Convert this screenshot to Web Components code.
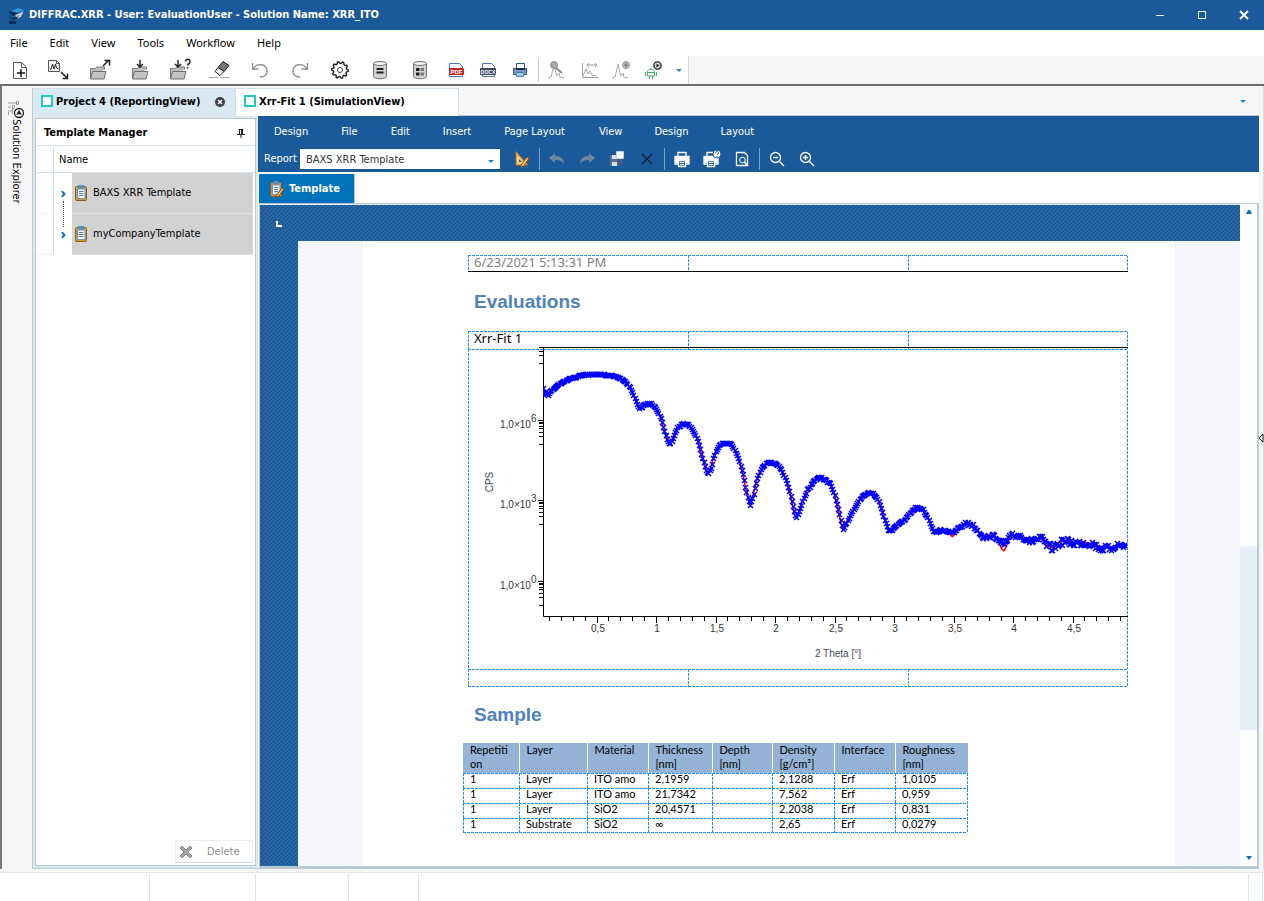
<!DOCTYPE html>
<html lang="en">
<head>
<meta charset="utf-8">
<title>DIFFRAC.XRR</title>
<style>
  html, body { margin: 0; height: 100%; }
  body { font: 11px/16px "DejaVu Sans Condensed", "Noto Sans", sans-serif; color: #000; background: #fff; }
</style>
</head>
<body>
<xrr-app></xrr-app>

<script>
const BASE = `
  *, *::before, *::after { box-sizing: border-box; }
  button, select { font: inherit; color: inherit; background: none; border: 0; padding: 0; margin: 0; }
  :host([hidden]) { display: none; }
`;

function element(name, css, html, after) {
  const template = document.createElement('template');
  template.innerHTML = `<style>${BASE}${css}</style>${html}`;
  customElements.define(name, class extends HTMLElement {
    constructor() {
      super();
      this.attachShadow({ mode: 'open' }).append(template.content.cloneNode(true));
    }
    connectedCallback() { if (after) after(this, this.shadowRoot); }
  });
}

/* ---------- icons ---------- */
const folder = `<path d="M3.5 20V10.5h5l1-1.500h8v2.500" fill="#bdbdbd" stroke="#7a7a7a"/><path d="M3.500 21l2-7.500h13.500l-2 7.500z" fill="#c4c4c4" stroke="#6d6d6d"/>`;
const peaks = `<path d="M3 20l3-1 1-4 2-9 2 9 1 3 2-3 1 4 4 1" fill="none" stroke="#a9a9a9"/>`;
const printer = c => `<path d="M8 9V5.500h8V9M8 17H5V9.500h14V17h-3" fill="none" stroke="${c}" stroke-width="1.300"/><path d="M5 10h14v6H5z" fill="${c}"/><path d="M8.500 13.500h7v6h-7z" fill="#1b5a9a" stroke="${c}" stroke-width="1.300"/><path d="M10 15.500h4M10 17.500h4" stroke="${c}"/>`;
const cylinder = `<path d="M5.500 5.500v13c0 3 13 3 13 0v-13" fill="#d2d2d2" stroke="#6f6f6f"/><ellipse cx="12" cy="5.500" rx="6.500" ry="2" fill="#eee" stroke="#6f6f6f"/>`;
const clipboard = `<rect x="6.500" y="5.500" width="11" height="14" rx="1" fill="#d69a2e" stroke="#8c5a10"/><path d="M8.500 8h7.500v9.500H8.500z" fill="#f4f8fe" stroke="#6f93c0"/><rect x="9" y="4" width="6" height="3.500" rx="1" fill="#4f8bcb"/><path d="M10 10.500h4.500M10 12.500h4.500M10 14.500h4.500" stroke="#4a84c8"/>`;
const gear = (() => {
  const pts = [];
  for (let i = 0; i < 40; i++) {
    const r = (i % 4 < 2) ? 8.3 : 6.6, a = i / 40 * Math.PI * 2;
    pts.push((12 + r * Math.cos(a)).toFixed(2) + ' ' + (12 + r * Math.sin(a)).toFixed(2));
  }
  return 'M' + pts.join('L') + 'z';
})();
const ICONS = {
  app: `<path d="M7 8l7-3 6 2-5 3z" fill="#2e9be0"/><path d="M5 8l8 2 7-2-1 3-6 3-7-3z" fill="#0a2c50"/><path d="M11 12l9-4-3 6-4 2z" fill="#b9c8d6"/><path d="M5 13c3 3 8 2 10-1l-2 4-5 1z" fill="#16324f"/><path d="M5 18h7v3H5z" fill="#0d2f58"/>`,
  'new': `<path d="M5.500 4.500h8l5 5v11h-13z" fill="#fff" stroke="#5a5a5a"/><path d="M13.500 4.500v5h5" fill="none" stroke="#5a5a5a"/><path d="M13 11v8M9 15h8" stroke="#111" stroke-width="1.500"/>`,
  importcurve: `<path d="M.5 2.500h8l3 3v8H.5z" fill="#f4f4f4" stroke="#555"/><path d="M8.500 2.500v3h3" fill="none" stroke="#555"/><path d="M2 12l1.500-2 1-4 1.500 5 1.500-5 1 4 2 1" fill="none" stroke="#222"/><path d="M13 14l6 6M19.500 15.500v5h-5" fill="none" stroke="#222" stroke-width="1.500"/>`,
  open: `<g transform="translate(-1)">${folder}</g><path d="M15 8l6-6M16.500 2.500h5v5" fill="none" stroke="#222" stroke-width="1.500"/>`,
  save: `<g transform="translate(1)">${folder}</g><path d="M12 2v7M9 6l3 3 3-3" fill="none" stroke="#222" stroke-width="1.500"/>`,
  saveas: `<g transform="translate(-1)">${folder}<path d="M11 2v7M8 6l3 3 3-3" fill="none" stroke="#222" stroke-width="1.500"/></g><path d="M17.500 3.500c0-3 5-3 4.500.5 0 2-2.500 1.500-2.500 3.500M19.500 9v1.500" fill="none" stroke="#222" stroke-width="1.500"/>`,
  erase: `<path d="M10 9.500l5-6 6 4-5 6z" fill="#777" stroke="#222"/><path d="M10 9.500l-3 4 5 4 4-4z" fill="#eee" stroke="#222"/><path d="M1 19.500h9M12 19.500h10" stroke="#aaa"/>`,
  undo: `<path d="M4.500 5v6h6M5 11c3-6 14-6 14 2 0 4-3 6-7 6" fill="none" stroke="#8d8d8d" stroke-width="1.300"/>`,
  redo: `<path d="M19.500 5v6h-6M19 11c-3-6-14-6-14 2 0 4 3 6 7 6" fill="none" stroke="#8d8d8d" stroke-width="1.300"/>`,
  settings: `<path d="${gear}" fill="#fff" stroke="#222" stroke-width="1.400"/><circle cx="12" cy="12" r="2.500" fill="none" stroke="#444"/>`,
  database: `${cylinder}<path d="M8.500 11h7M8.500 14.500h7" stroke="#222" stroke-width="2"/>`,
  datagrid: `${cylinder}<path d="M8 10h3.500v3H8zM8 14.500h3.500v3H8z" fill="#222"/><path d="M12.500 10H16v3h-3.500zM12.500 14.500H16v3h-3.500z" fill="#777"/>`,
  pdf: `<path d="M5.500 5.500h10l3 3v10h-13z" fill="#fff" stroke="#5472b4"/><rect x="5" y="10" width="15" height="7" rx="1" fill="#c5282c"/><text x="12.500" y="16" text-anchor="middle" font-family="Liberation Sans" font-size="6" font-weight="bold" fill="#fff">PDF</text>`,
  docx: `<path d="M6.500 5.500h9l3 3v10h-12z" fill="#fff" stroke="#5472b4"/><rect x="4" y="10" width="16" height="7" rx="1" fill="#3d4a66"/><text x="12" y="15.500" text-anchor="middle" font-family="Liberation Sans" font-size="5" font-weight="bold" fill="#fff">DOCX</text>`,
  print: `<path d="M8.500 5.500h8v5h-8z" fill="#fff" stroke="#34568f"/><path d="M5.500 10.500h13v6h-13z" fill="#7d98cf" stroke="#2f4d87"/><path d="M8 10h9v2H8z" fill="#1c2c4c"/><path d="M8.500 14.500h7v4h-7z" fill="#9fd4f7" stroke="#4b79b8"/>`,
  peakfind: `${peaks}<circle cx="9" cy="7" r="3.500" fill="#aaa" stroke="#8a8a8a"/><path d="M11 10l6 5" stroke="#8a8a8a" stroke-width="2"/>`,
  range: `<path d="M5.500 5v14.500h16" fill="none" stroke="#a6a6a6"/><path d="M6 18l3-7 2 5 2-3 2 4 5 1" fill="none" stroke="#a6a6a6"/><path d="M10 7h10M12 5l-2 2 2 2M18 5l2 2-2 2" fill="none" stroke="#999"/>`,
  peakadd: `${peaks}<circle cx="17" cy="7" r="3.500" fill="#bbb" stroke="#999"/><path d="M15 7h4M17 5v4" stroke="#777"/>`,
  robot: `<path d="M6.500 18v-4.500c0-3 7-3 7 0V18zM4.500 14v4M15.500 14v4M8.500 18v3M11.500 18v3M6.500 14.500h7M10 11V9.500" fill="none" stroke="#3fae6c"/><circle cx="16.500" cy="7.500" r="3.600" fill="#ddd" stroke="#222" stroke-width="1.400"/><path d="M15.500 5.500l3 2-3 2z" fill="#111"/>`,
  caret: `<path d="M9 11h6l-3 3z" fill="#1f83c8"/>`,
  up: `<path d="M9 14h6l-2-4h-2z" fill="#0b6fb8"/>`,
  down: `<path d="M9 10h6l-3 4z" fill="#0b6fb8"/>`,
  tabclose: `<circle cx="12" cy="12" r="5" fill="#3b3f44"/><path d="M10 10l4 4M14 10l-4 4" stroke="#fff" stroke-width="1.500"/>`,
  view: `<path d="M7 6h10v10H7z" fill="#fff" stroke="#1fc9c4" stroke-width="2"/>`,
  pin: `<path d="M10.500 8.500h5M11.500 8.500v5M9 13.500h8M13 14v3" fill="none" stroke="#222"/><path d="M13 8h2v5.500h-2z" fill="#222"/>`,
  explorer: `<path d="M4 5h8M4 9h3M4 13h4M4.500 14v3M8.500 8v8" stroke="#9a9a9a" fill="none"/><path d="M12.500 3.500h2v3h-2zM8.500 7.500h2v3h-2z" fill="#fff" stroke="#9a9a9a"/><circle cx="15" cy="15" r="4.500" fill="#eee" stroke="#222" stroke-width="1.300"/><path d="M15 12l3 5-3-1-3 1z" fill="#222"/>`,
  expand: `<path d="M10 9h2l3 3-3 3h-2l2-3z" fill="#1173c2"/>`,
  clipboard: clipboard,
  designer: `<path d="M6.500 6v11.500h10z" fill="#ffd48a" stroke="#e99a35" stroke-width="1.500"/><path d="M9 12v3h3z" fill="#1b5a9a"/><path d="M11 18l6-8 2 1-5 8-3 1z" fill="#ffc266" stroke="#8a5212"/>`,
  templ: `<g transform="translate(-1)">${clipboard.replace('#d69a2e', '#d98c42')}</g><path d="M11 19l6-8 2 1-5 7-3 1z" fill="#ffc25e" stroke="#8a4a12"/>`,
  back: `<path d="M4 11l6-5v3c6 0 9 3 9 8-2-3-4-4-9-4v3z" fill="#70889f"/>`,
  fwd: `<path d="M20 11l-6-5v3c-6 0-9 3-9 8 2-3 4-4 9-4v3z" fill="#70889f"/>`,
  disks: `<path d="M5 8h8v11H5z" fill="#5c6f99"/><path d="M7 8h5v4H7zM7 15h5v4H7z" fill="#d8dfee"/><path d="M12 12h5v6h-5z" fill="#495b85"/><path d="M11.500 4.500h7v7h-7z" fill="#f2f5fb" stroke="#c3cfe4"/>`,
  cross: `<path d="M7 7l10 10M17 7L7 17" stroke="#0d1b2a" stroke-width="1.200"/>`,
  wprint: printer('#fff'),
  wprintq: `<g transform="translate(-1)">${printer('#fff')}</g><circle cx="17" cy="7" r="4" fill="#fff" stroke="#1b5a9a"/><path d="M15.500 6c0-2 3-2 3 0 0 1-1.500 1-1.500 2M17 9v1" fill="none" stroke="#1b5a9a"/>`,
  preview: `<path d="M6.500 5.500h8l3 3v10h-11z" fill="none" stroke="#fff" stroke-width="1.300"/><circle cx="12.500" cy="13" r="2.800" fill="#1b5a9a" stroke="#fff"/><path d="M14.500 15l3 3.500" stroke="#fff" stroke-width="1.500"/>`,
  zoomout: `<circle cx="10.500" cy="10.500" r="5" fill="none" stroke="#fff" stroke-width="1.300"/><path d="M8 10.500h5M14.500 14.500l4.500 4.500" stroke="#fff" stroke-width="1.500"/>`,
  zoomin: `<circle cx="10.500" cy="10.500" r="5" fill="none" stroke="#fff" stroke-width="1.300"/><path d="M8 10.500h5M10.500 8v5M14.500 14.500l4.500 4.500" stroke="#fff" stroke-width="1.500"/>`,
  min: `<path d="M9 12.500h8" stroke="#fff"/>`,
  max: `<path d="M9.500 8.500h7v7h-7z" fill="none" stroke="#fff"/>`,
  close: `<path d="M9 8l8 8M17 8l-8 8" stroke="#fff" stroke-width="1.800"/>`,
  'delete': `<path d="M6 8l2-2 4 4 4-4 2 2-4 4 4 4-2 2-4-4-4 4-2-2 4-4z" fill="#a4a4a4" stroke="#8a8a8a"/>`,
};

element('xrr-icon', `
  :host { display: block; width: 24px; height: 24px; flex: none; }
  svg { display: block; width: 100%; height: 100%; }
`, `<svg viewBox="0 0 24 24" aria-hidden="true"></svg>`, (host, root) => {
  root.querySelector('svg').innerHTML = ICONS[host.getAttribute('name')] || '';
});

element('tool-button', `
  :host { display: block; width: var(--tool-width, 40px); flex: none; }
  button { display: flex; width: 100%; height: 28px; align-items: center; justify-content: center; }
`, `<button type="button"><xrr-icon></xrr-icon></button>`, (host, root) => {
  root.querySelector('button').setAttribute('aria-label', host.getAttribute('label'));
  const old = root.querySelector('xrr-icon');
  const icon = document.createElement('xrr-icon');
  icon.setAttribute('name', host.getAttribute('icon'));
  old.replaceWith(icon);
});

element('menu-item', `
  :host { display: block; flex: none; }
  button { display: block; height: 26px; padding: 0 var(--menu-pad, 11px); white-space: nowrap; }
`, `<button type="button"><slot></slot></button>`);

element('title-bar', `
  :host { display: flex; align-items: center; height: 30px; flex: none; padding-left: 4px; background: #1b5a9a; color: #fff; font-weight: bold; }
  h1 { font: inherit; margin: 0; flex: 1; padding-left: 1px; white-space: nowrap; }
  nav { display: flex; --tool-width: 42px; }
`, `<xrr-icon name="app"></xrr-icon><h1><slot></slot></h1>
  <nav aria-label="Window">
    <tool-button icon="min" label="Minimize"></tool-button>
    <tool-button icon="max" label="Maximize"></tool-button>
    <tool-button icon="close" label="Close"></tool-button>
  </nav>`);

element('main-menu', `
  :host { display: flex; height: 26px; flex: none; background: #fff; font-family: "Noto Sans", sans-serif; }
`, `<slot></slot>`);

element('main-tools', `
  :host { display: flex; flex: none; background: #f6f6f6; border-bottom: 2px solid #6f6a6c; }
  div { display: flex; align-items: center; height: 28px; background: #fff; border-right: 1px solid #c9d9e3; }
  .small { --tool-width: 32px; border: 0; }
  .caret { --tool-width: 19px; }
  i { width: 1px; height: 24px; margin: 0 2px; background: #b9cfdd; }
`, `<div role="toolbar" aria-label="Main">
    <tool-button icon="new" label="New"></tool-button>
    <tool-button icon="importcurve" label="Import"></tool-button>
    <tool-button icon="open" label="Open"></tool-button>
    <tool-button icon="save" label="Save"></tool-button>
    <tool-button icon="saveas" label="Save as"></tool-button>
    <tool-button icon="erase" label="Clear"></tool-button>
    <tool-button icon="undo" label="Undo"></tool-button>
    <tool-button icon="redo" label="Redo"></tool-button>
    <tool-button icon="settings" label="Settings"></tool-button>
    <tool-button icon="database" label="Database"></tool-button>
    <tool-button icon="datagrid" label="Material database"></tool-button>
    <div class="small">
      <tool-button icon="pdf" label="Export as PDF"></tool-button>
      <tool-button icon="docx" label="Export as DOCX"></tool-button>
      <tool-button icon="print" label="Print"></tool-button>
      <i></i>
      <tool-button icon="peakfind" label="Find peak"></tool-button>
      <tool-button icon="range" label="Range"></tool-button>
      <tool-button icon="peakadd" label="Add peak"></tool-button>
      <tool-button icon="robot" label="Run automation"></tool-button>
      <tool-button class="caret" icon="caret" label="More tools"></tool-button>
    </div>
  </div>`);

element('side-rail', `
  :host { display: block; width: 32px; flex: none; border-left: 2px solid #777; padding: 12px 0 0 2px; }
  button { display: flex; align-items: center; width: 24px; writing-mode: vertical-rl; white-space: nowrap; }
  span { margin-top: -3px; }
`, `<button type="button"><xrr-icon name="explorer"></xrr-icon><span><slot></slot></span></button>`);

element('view-tab', `
  :host { display: flex; align-items: center; height: 28px; font-weight: bold; white-space: nowrap; padding: 0 0 1px 2px;
          background: #fff; border: 1px solid #cfe0ec; border-width: 1px 1px 0 0; width: 223px; }
  :host([active]) { background: #d9e9f4; width: 204px; border-left: 1px solid #b9cad3; }
  span { flex: 1; margin-left: -3px; }
  button { margin-right: 3px; }
  :host(:not([active])) button { display: none; }
`, `<xrr-icon name="view"></xrr-icon><span><slot></slot></span><button type="button" aria-label="Close tab"><xrr-icon name="tabclose"></xrr-icon></button>`);

element('tree-item', `
  :host { display: grid; grid-template-columns: 18px 18px 1fr; height: 41px; }
  .gutter { border-right: 1px solid #d5e1e8; border-bottom: 1px solid #eef2f5; }
  .twist { display: flex; align-items: center; justify-content: center; position: relative; }
  .twist xrr-icon { margin: 0 -3px; }
  :host([joined]) .twist::after { content: ""; position: absolute; left: 9px; top: 28px; height: 26px; border-left: 1px dotted #444; }
  .name { display: flex; align-items: center; background: #d2d2d2; border-bottom: 1px solid #dde3e6; }
  .name xrr-icon { margin: 0 0 0 -3px; }
`, `<div class="gutter"></div><button class="twist" type="button" aria-label="Expand"><xrr-icon name="expand"></xrr-icon></button>
  <div class="name"><xrr-icon name="clipboard"></xrr-icon><slot></slot></div>`);

element('template-manager', `
  :host { display: flex; flex: none; width: 226px; padding: 2px; background: #dfe8ec; border: 1px solid #b9cad3; border-width: 0 0 1px 1px; }
  section { display: flex; flex-direction: column; flex: 1; background: #fff; border: 1px solid #b9cad3; }
  header { display: flex; align-items: center; justify-content: space-between; height: 27px; padding: 1px 3px 0 8px; border-bottom: 1px solid #d5e1e8; }
  h2 { font: inherit; font-weight: bold; margin: 0; }
  .body { flex: 1; padding-right: 2px; }
  .column { display: flex; align-items: center; height: 27px; margin-right: -2px; border-bottom: 1px solid #d5e1e8; }
  .column::before { content: ""; width: 18px; height: 25px; border-right: 1px solid #d5e1e8; }
  .column span { padding: 2px 0 0 5px; }
  .delete { display: flex; align-items: center; align-self: flex-end; width: 78px; height: 23px; margin: 0 2px 2px; color: #8f8f8f;
            border: 1px solid #eceff1; border-bottom: 1px solid #c9d6de; }
  .delete xrr-icon { margin: 0 9px 0 -2px; }
`, `<section>
    <header><h2>Template Manager</h2><xrr-icon name="pin"></xrr-icon></header>
    <div class="body"><div class="column"><span>Name</span></div><slot></slot></div>
    <button class="delete" type="button"><xrr-icon name="delete"></xrr-icon>Delete</button>
  </section>`);

element('report-ribbon', `
  :host { display: block; flex: none; background: #1b5a9a; color: #fff; --menu-pad: 16px; --tool-width: 30px; padding-bottom: 1px; }
  nav, .tools { display: flex; align-items: center; }
  nav { height: 31px; padding-top: 1px; }
  .tools { height: 24px; padding-left: 6px; }
  label { width: 36px; }
  .combo { display: grid; align-items: center; width: 200px; height: 20px; margin-right: 7px; background: #fff; color: #333; }
  .combo > * { grid-area: 1 / 1; }
  select { appearance: none; width: 100%; height: 20px; padding: 0 0 2px 6px; }
  .combo xrr-icon { justify-self: end; margin-right: -3px; pointer-events: none; }
  i { width: 1px; height: 22px; margin: 0 2px; background: #7fa3c6; }
  menu-item:nth-child(n+2):not(:nth-child(n+6)) { margin-left: 1px; }
  menu-item:nth-child(6) { margin-left: 2px; }
`, `<nav aria-label="Report">
    <menu-item>Design</menu-item><menu-item>File</menu-item><menu-item>Edit</menu-item><menu-item>Insert</menu-item>
    <menu-item>Page Layout</menu-item><menu-item>View</menu-item><menu-item>Design</menu-item><menu-item>Layout</menu-item>
  </nav>
  <div class="tools">
    <label for="report">Report</label>
    <div class="combo"><select id="report"><option>BAXS XRR Template</option></select><xrr-icon name="caret"></xrr-icon></div>
    <tool-button icon="designer" label="Designer"></tool-button><i></i>
    <tool-button icon="back" label="Undo"></tool-button>
    <tool-button icon="fwd" label="Redo"></tool-button>
    <tool-button icon="disks" label="Save as"></tool-button>
    <tool-button icon="cross" label="Remove"></tool-button><i></i>
    <tool-button icon="wprint" label="Print"></tool-button>
    <tool-button icon="wprintq" label="Print setup"></tool-button>
    <tool-button icon="preview" label="Preview"></tool-button><i></i>
    <tool-button icon="zoomout" label="Zoom out"></tool-button>
    <tool-button icon="zoomin" label="Zoom in"></tool-button>
  </div>`);

/* ---------- reflectivity plot ---------- */
const CURVE = [543,391, 547,395, 552,389, 560,383, 570,378, 580,375, 590,374, 600,374, 610,375, 618,377, 625,381, 630,387, 634,396, 637,404,
  640,408, 643,405, 648,403, 652,404, 657,410, 661,418, 664,430, 667,440, 670,444, 673,437, 677,428, 681,424, 685,423, 689,425, 694,432,
  698,442, 702,456, 706,470, 708,474, 711,467, 715,452, 719,445, 723,443, 730,443, 734,449, 739,460, 743,474, 746,490, 749,502, 750,505,
  753,496, 757,479, 761,468, 766,463, 771,462, 775,463, 781,469, 786,480, 790,493, 793,507, 796,518, 799,511, 802,502, 807,490, 813,481,
  819,477, 825,479, 830,484, 834,493, 838,508, 841,523, 843,530, 846,523, 851,513, 857,503, 862,496, 868,492, 873,493, 878,500, 882,511,
  886,524, 888,530, 891,530, 895,526, 900,522, 905,519, 910,512, 916,507, 922,509, 927,516, 931,526, 934,532, 940,530, 946,530, 952,533,
  957,529, 962,525, 968,522, 973,526, 978,531, 983,537, 987,537, 992,535, 997,538, 1000,543, 1004,544, 1008,539, 1012,535, 1018,535,
  1024,537, 1030,541, 1036,539, 1042,539, 1047,546, 1053,548, 1058,543, 1064,541, 1070,542, 1078,543, 1085,542, 1092,544, 1098,547,
  1104,548, 1110,548, 1116,545, 1122,545, 1128,545];
const X0 = 468, Y0 = 349;

function curveAt(x) {
  let i = 0;
  while (i < CURVE.length - 4 && CURVE[i + 2] <= x) i += 2;
  const t = (x - CURVE[i]) / (CURVE[i + 2] - CURVE[i]);
  return CURVE[i + 1] + t * (CURVE[i + 3] - CURVE[i + 1]);
}

function drawPlot(svg) {
  let seed = 7;
  const random = () => (seed = (seed * 16807) % 2147483647) / 2147483647 - .5;
  let marks = '', fit = '';
  for (let x = 543; x <= 1127; x += 1.19) {
    const base = curveAt(x);
    const dip = 4 * Math.exp(-(((x - 953) / 4) ** 2)) + 7 * Math.exp(-(((x - 1004) / 4) ** 2));
    fit += (fit ? 'L' : 'M') + (x - X0).toFixed(1) + ' ' + (base + dip - Y0).toFixed(1);
    const spread = x < 550 ? 6 : x < 940 ? 1 : x < 1000 ? 3 : x < 1030 ? 6 : 7;
    const mx = Math.round(x - X0), my = Math.round(base + random() * spread - Y0);
    marks += `M${mx - 2} ${my - 2}l5 5M${mx + 3} ${my - 2}l-5 5`;
  }
  let axes = 'M75.5 -2V267.5H660M75 -1.5H660', labels = '';
  for (const major of [-9, 72, 152, 233]) {
    if (major > 0) axes += `M70 ${major - .5}h5`;
    for (let k = 1; k < 8; k++) {
      const y = Math.round(major + 27 * Math.log10(8 / k));
      if (y > -2) axes += `M71 ${y - .5}h4`;
    }
  }
  [['6', 72], ['3', 152], ['0', 233]].forEach(([power, y]) => {
    labels += `<text x="32" y="${y + 7}">1,0×10</text><text x="63" y="${y + 1}">${power}</text>`;
  });
  for (let n = 1; n <= 49; n++) {
    const x = Math.round(70 + n * 11.9);
    axes += `M${x - .5} 268v${n % 5 ? 4 : 6}`;
    if (n % 5 === 0) labels += `<text x="${x}" y="283" text-anchor="middle">${String(n / 10).replace('.', ',')}</text>`;
  }
  svg.innerHTML = `
    <clipPath id="area"><rect x="75" y="-2" width="584" height="270"/></clipPath>
    <path d="${axes}" fill="none" stroke="#000"/>
    <g clip-path="url(#area)"><path d="${fit}" fill="none" stroke="#f00" stroke-width="1.600"/><path d="${marks}" fill="none" stroke="#00f" stroke-width="1.500"/></g>
    <g font-family="Liberation Sans, sans-serif" font-size="10" fill="#333">${labels}
      <text x="370" y="308" text-anchor="middle" fill="#3d4d57">2 Theta [°]</text>
      <text transform="translate(25 133) rotate(-90)" text-anchor="middle" fill="#3d4d57">CPS</text></g>`;
}

element('reflectivity-plot', `
  :host { display: block; }
  svg { display: block; width: 100%; overflow: visible; }
`, `<svg viewBox="0 0 660 320" role="img" aria-label="Reflectivity fit"></svg>`, (host, root) => drawPlot(root.querySelector('svg')));

element('report-page', `
  :host { display: block; flex: 1; padding: 14px 47px 0 105px; background: #fff; min-width: 0;
    --row: repeating-linear-gradient(90deg, #1e90f5 0 3px, #fff 3px 4px);
    --col: repeating-linear-gradient(180deg, #1e90f5 0 3px, #fff 3px 4px); }
  article { max-width: 660px; }
  h2 { margin: 0; padding-left: 6px; font: bold 19px/59px "Liberation Sans", sans-serif; color: #4f81bd; }
  h2.second { line-height: 56px; }
  table { width: 100%; border-collapse: collapse; table-layout: fixed; }
  td, th { padding: 0; text-align: left; vertical-align: top; font-weight: normal; }
  .grid { font: 13px/14px "Noto Sans", sans-serif; background: var(--col) right top / 1px 100% no-repeat; }
  .grid td { height: 18px; padding-left: 6px; background: var(--row) left top / 100% 1px no-repeat, var(--col) left top / 1px 100% no-repeat; }
  .grid td.plot { padding: 0; }
  .grid.head { color: #7f7f7f; border-bottom: 1px solid #000; }
  .grid.head td { height: 16px; }
  .grid.full { background: var(--col) right top / 1px 100% no-repeat, var(--row) left bottom / 100% 1px no-repeat; }
  .sample { width: 505px; margin-left: -5px; font: 11px/15px Lato, sans-serif;
            background: var(--col) right 30px / 1px 100% no-repeat, var(--row) left bottom / 100% 1px no-repeat; }
  .sample th { height: 30px; padding-left: 7px; line-height: 14px; background: #95b3d7; border-left: 1px solid #fff; }
  .sample th:first-child { border-left: 0; }
  .sample td { height: 15px; padding-left: 7px; line-height: 11px;
            background: var(--row) left top / 100% 1px no-repeat, var(--col) left top / 1px 100% no-repeat; }
`, `<article>
    <table class="grid head"><tbody><tr><td>6/23/2021 5:13:31 PM</td><td></td><td></td></tr></tbody></table>
    <h2>Evaluations</h2>
    <table class="grid full"><tbody>
      <tr><td>Xrr-Fit 1</td><td></td><td></td></tr>
      <tr><td class="plot" colspan="3"><reflectivity-plot></reflectivity-plot></td></tr>
      <tr><td></td><td></td><td></td></tr>
    </tbody></table>
    <h2 class="second">Sample</h2>
    <table class="sample">
      <colgroup><col width="56"><col width="68"><col width="61"><col width="64"><col width="60"><col width="62"><col width="61"><col width="73"></colgroup>
      <thead><tr><th>Repetiti<br>on</th><th>Layer</th><th>Material</th><th>Thickness<br>[nm]</th><th>Depth<br>[nm]</th><th>Density<br>[g/cm³]</th><th>Interface</th><th>Roughness<br>[nm]</th></tr></thead>
      <tbody>
        <tr><td>1</td><td>Layer</td><td>ITO amo</td><td>2,1959</td><td></td><td>2,1288</td><td>Erf</td><td>1,0105</td></tr>
        <tr><td>1</td><td>Layer</td><td>ITO amo</td><td>21,7342</td><td></td><td>7,562</td><td>Erf</td><td>0,959</td></tr>
        <tr><td>1</td><td>Layer</td><td>SiO2</td><td>20,4571</td><td></td><td>2,2038</td><td>Erf</td><td>0,831</td></tr>
        <tr><td>1</td><td>Substrate</td><td>SiO2</td><td>∞</td><td></td><td>2,65</td><td>Erf</td><td>0,0279</td></tr>
      </tbody>
    </table>
  </article>`);

element('report-canvas', `
  :host { display: flex; flex: 1; min-height: 0; border: solid #b9cad3; border-width: 1px 2px 2px 1px; background: #fff; }
  .desk { display: flex; flex-direction: column; flex: 1; min-width: 0; overflow: hidden; border-top: 1px solid #dbe7ee;
          background: linear-gradient(135deg, #1b5896 25%, #2b69a9 25% 50%, #1b5896 50% 75%, #2b69a9 75%) 0 0 / 4px 4px; }
  .ruler { flex: none; height: 36px; padding: 16px 0 0 16px; }
  .ruler i { display: block; width: 6px; height: 6px; border: solid #fff; border-width: 0 0 2px 2px; }
  .sheet { display: flex; flex: 1; min-height: 0; margin-left: 38px; padding: 0 65px; background: #f5f6fb; }
  .scroll { display: grid; grid-template-rows: 16px 326px 184px 1fr 16px; width: 17px; flex: none; justify-items: center; }
  .thumb { grid-row: 3; width: 100%; background: #e4eff9; }
  .scroll xrr-icon { margin: -4px; }
  .scroll xrr-icon:last-child { grid-row: 5; }
`, `<div class="desk"><div class="ruler"><i></i></div><div class="sheet"><slot></slot></div></div>
  <div class="scroll"><xrr-icon name="up"></xrr-icon><div class="thumb"></div><xrr-icon name="down"></xrr-icon></div>`);

element('report-view', `
  :host { display: flex; flex-direction: column; flex: 1; min-width: 0; min-height: 0; background: #fff; border-bottom: 1px solid #b9cad3; }
  .tabs { display: flex; align-items: flex-end; height: 31px; flex: none; padding-left: 1px; }
  .tabs button { display: flex; align-items: center; width: 96px; height: 29px; padding-left: 6px; background: #0072bc; color: #fff;
                 font-weight: bold; border-right: 1px solid #b9cad3; }
  report-canvas { margin-left: 1px; }
`, `<report-ribbon></report-ribbon>
  <div class="tabs"><button type="button"><xrr-icon name="templ"></xrr-icon>Template</button></div>
  <report-canvas><report-page></report-page></report-canvas>`);

element('status-bar', `
  :host { display: grid; grid-template-columns: 150px 106px 93px 70px 1fr 14px 1px; height: 29px; flex: none; border-top: 1px solid #e4e4e4; padding-top: 1px; background: #fff; }
  i { border-right: 1px solid #d8e8f2; }
`, `<i></i><i></i><i></i><i></i><i></i><i></i>`);

element('xrr-app', `
  :host { display: flex; flex-direction: column; height: 100vh; overflow: hidden; }
  main-menu menu-item:first-child { margin-left: -1px; }
  .main { display: flex; flex: 1; min-height: 0; background: #f6f6f6; padding-bottom: 3px; }
  .work { display: flex; flex-direction: column; flex: 1; min-width: 0; }
  .tabs { display: flex; height: 30px; padding-top: 2px; flex: none; border-bottom: 1px solid #b9cad3; }
  .tabs .more { margin: -1px 4px 0 auto; --tool-width: 24px; }
  .panes { display: flex; flex: 1; min-height: 0; }
  .splitter { display: flex; align-items: center; width: 5px; flex: none; border-right: 1px solid #ddd; }
  .splitter svg { flex: none; margin: -80px 0 0 -1px; }
`, `<title-bar>DIFFRAC.XRR - User: EvaluationUser - Solution Name: XRR_ITO</title-bar>
  <main-menu><menu-item>File</menu-item><menu-item>Edit</menu-item><menu-item>View</menu-item><menu-item>Tools</menu-item><menu-item>Workflow</menu-item><menu-item>Help</menu-item></main-menu>
  <main-tools></main-tools>
  <div class="main">
    <side-rail>Solution Explorer</side-rail>
    <div class="work">
      <div class="tabs">
        <view-tab active>Project 4 (ReportingView)</view-tab><view-tab>Xrr-Fit 1 (SimulationView)</view-tab>
        <tool-button class="more" icon="caret" label="More views"></tool-button>
      </div>
      <div class="panes">
        <template-manager><tree-item joined>BAXS XRR Template</tree-item><tree-item>myCompanyTemplate</tree-item></template-manager>
        <report-view></report-view>
      </div>
    </div>
    <div class="splitter"><svg width="6" height="10" viewBox="0 0 6 10" aria-hidden="true"><path d="M5 1v8L1 5z" fill="#fff" stroke="#222"/></svg></div>
  </div>
  <status-bar></status-bar>`);
</script>
</body>
</html>
